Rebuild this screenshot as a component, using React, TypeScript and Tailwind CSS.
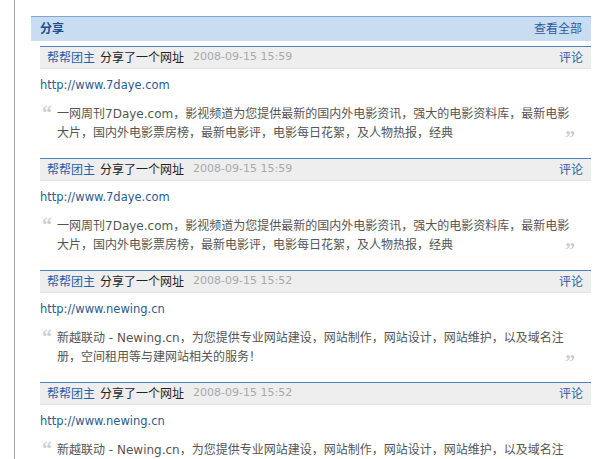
const items = [
  {
    time: "2008-09-15 15:59",
    url: "http://www.7daye.com",
    lines: [
      "一网周刊7Daye.com，影视频道为您提供最新的国内外电影资讯，强大的电影资料库，最新电影",
      "大片，国内外电影票房榜，最新电影评，电影每日花絮，及人物热报，经典",
    ],
  },
  {
    time: "2008-09-15 15:59",
    url: "http://www.7daye.com",
    lines: [
      "一网周刊7Daye.com，影视频道为您提供最新的国内外电影资讯，强大的电影资料库，最新电影",
      "大片，国内外电影票房榜，最新电影评，电影每日花絮，及人物热报，经典",
    ],
  },
  {
    time: "2008-09-15 15:52",
    url: "http://www.newing.cn",
    lines: [
      "新越联动 - Newing.cn，为您提供专业网站建设，网站制作，网站设计，网站维护，以及域名注",
      "册，空间租用等与建网站相关的服务！",
    ],
  },
  {
    time: "2008-09-15 15:52",
    url: "http://www.newing.cn",
    lines: [
      "新越联动 - Newing.cn，为您提供专业网站建设，网站制作，网站设计，网站维护，以及域名注",
      "册，空间租用等与建网站相关的服务！",
    ],
  },
];

const App = () => {
  return (
    <div className="h-[459px] overflow-hidden bg-white pl-[14px] font-['DejaVu_Sans','Noto_Sans_CJK_SC',sans-serif] text-[12px]">
      <div className="h-full border-l border-[#a3a3a3] pl-[16px] pt-[16px]">
        <div className="w-[560px]">
          {/* Section title */}
          <div className="flex h-[25px] items-center justify-between border-t border-[#7fa6d3] bg-[#c8dcf2] px-[9px]">
            <span className="font-bold text-[#1d4f8c]">分享</span>
            <span className="text-[#2d5c98]">查看全部</span>
          </div>

          {/* Feed */}
          <div className="ml-[9px] mt-[5px] flex flex-col gap-[7px]">
            {items.map((item, i) => (
              <div key={i}>
                <div className="flex h-[23px] items-center justify-between border-t border-[#4f80ba] border-b border-b-[#e2e2e2] bg-[#eeeeee] pl-[7px] pr-[8px]">
                  <div className="flex items-center gap-[5px] whitespace-nowrap">
                    <span className="text-[#2a5ea8]">帮帮团主</span>
                    <span className="text-[#222]">分享了一个网址</span>
                    <span className="ml-[4px] text-[11px] text-[#a8a8a8]">{item.time}</span>
                  </div>
                  <span className="text-[#2a5ea8]">评论</span>
                </div>

                <div className="mt-[6px] h-[20px] text-[11.5px] leading-[20px] text-[#2b5a94]">
                  {item.url}
                </div>

                <div className="mt-[10px] flex h-[46px] bg-linear-to-b from-white from-85% to-[#fffcf3] pr-[16px] text-[#555]">
                  <span className="h-[19px] w-[17px] shrink-0 pl-[2px] font-['Liberation_Serif',serif] text-[20px] font-bold leading-[17px] text-[#d0d0d0]">
                    “
                  </span>
                  <div className="flex-1 whitespace-nowrap leading-[19px]">
                    <div className="h-[19px]">{item.lines[0]}</div>
                    <div className="flex h-[19px] justify-between">
                      <span>{item.lines[1]}</span>
                      <span className="translate-y-[5px] font-['Liberation_Serif',serif] text-[20px] font-bold leading-[19px] text-[#d0d0d0]">
                        ”
                      </span>
                    </div>
                  </div>
                </div>
              </div>
            ))}
          </div>
        </div>
      </div>
    </div>
  );
};

export default App;
